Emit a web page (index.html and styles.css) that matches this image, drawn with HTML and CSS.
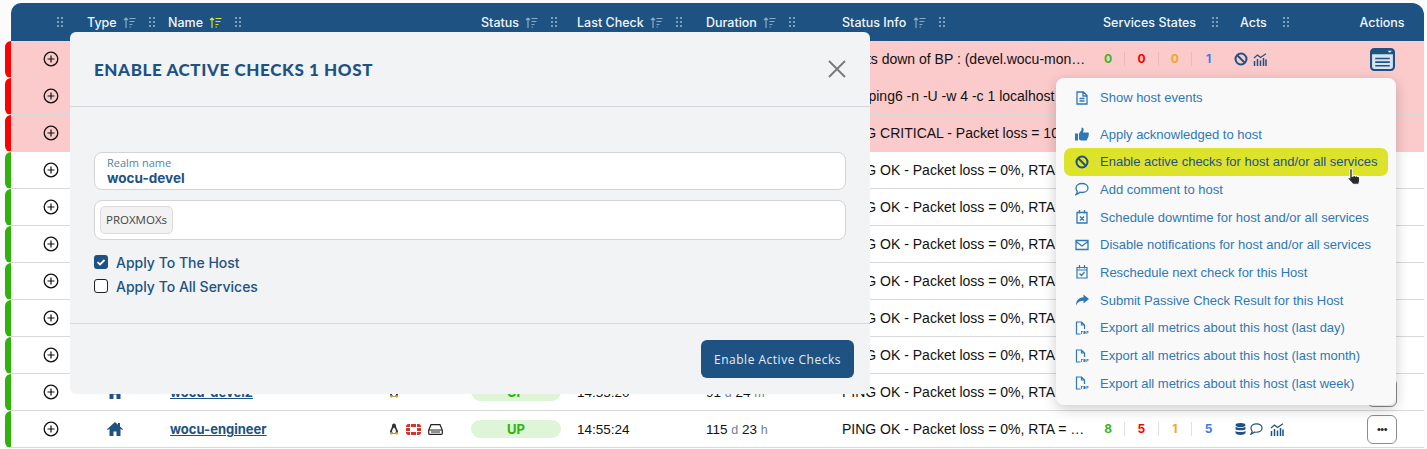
FILE: index.html
```html
<!DOCTYPE html>
<html lang="en">
<head>
    <meta charset="UTF-8">
    <title>Hosts</title>
    <link rel="stylesheet" href="styles.css">
</head>
<body>
    <!-- shared icons -->
    <svg class="defs" width="0" height="0">
        <symbol id="i-grip" viewBox="0 0 8 10"><g fill="currentColor"><rect x="1" y="0" width="2" height="2"/><rect x="5" y="0" width="2" height="2"/><rect x="1" y="4" width="2" height="2"/><rect x="5" y="4" width="2" height="2"/><rect x="1" y="8" width="2" height="2"/><rect x="5" y="8" width="2" height="2"/></g></symbol>
        <symbol id="i-sort" viewBox="0 0 13 11"><path d="M3 11V1M1 3l2-2 2 2M6.500 1.500h6M6.500 4.500h5M6.500 7.500h3M6.500 10h1.500" fill="none" stroke="currentColor" stroke-width="1.200"/></symbol>
        <symbol id="i-plus" viewBox="0 0 16 16"><circle cx="8" cy="8" r="6.800" fill="none" stroke="currentColor" stroke-width="1.300"/><path d="M8 4.500v7M4.500 8h7" stroke="currentColor" stroke-width="1.200"/></symbol>
        <symbol id="i-home" viewBox="0 0 16 14"><path d="M8 0L0 7.200l.8.800L2.500 6.700V14h4V9.500h3V14h4V6.700L15.200 8l.8-.8L13 4.500V1h-2v1.700z" fill="currentColor"/></symbol>
        <symbol id="i-ban" viewBox="0 0 14 14"><circle cx="7" cy="7" r="5.500" fill="none" stroke="currentColor" stroke-width="2"/><path d="M3 3l8 8" stroke="currentColor" stroke-width="2"/></symbol>
        <symbol id="i-chart" viewBox="0 0 14 13"><path d="M1 5l3.500-3 3 2.500L13 .8" fill="none" stroke="currentColor" stroke-width="1.200"/><path d="M1.500 8v5M4.500 6v7M7.500 7.500V13M10.500 5v8M13 6.500V13" stroke="currentColor" stroke-width="1.500"/></symbol>
        <symbol id="i-comment" viewBox="0 0 14 13"><path d="M7 1c3.300 0 6 1.900 6 4.500S10.300 10 7 10c-.8 0-1.500-.1-2.200-.3C3.800 10.800 2.500 11.600 1 12c.7-.9 1.300-2 1.300-3C1.500 8 1 6.800 1 5.500 1 2.900 3.700 1 7 1z" fill="none" stroke="currentColor" stroke-width="1.300"/></symbol>
        <symbol id="i-db" viewBox="0 0 11 12"><g fill="currentColor"><ellipse cx="5.500" cy="2" rx="5" ry="2"/><path d="M.5 3.700C1.500 5 9.500 5 10.500 3.700v2.500C9.500 7.500 1.500 7.500.5 6.200zM.5 8c1 1.300 9 1.300 10 0v2c-1 2.600-9 2.600-10 0z"/></g></symbol>
        <symbol id="i-file" viewBox="0 0 12 14"><path d="M1 1h6.500L11 4.500V13H1zM7 1v4h4M3.500 7.500h5M3.500 10h5" fill="none" stroke="currentColor" stroke-width="1.300"/></symbol>
        <symbol id="i-thumb" viewBox="0 0 14 13"><path d="M0 6h3v7H0zM4 6l2.500-3.500V.3C8 0 9 1 8.500 3L8 5h4.700c1.500 0 1.600 2 .7 2.400.6.700.3 1.700-.4 2 .3.800-.1 1.600-.8 1.800.1 1-.5 1.800-1.700 1.800H7c-1.200 0-2-.5-3-1z" fill="currentColor"/></symbol>
        <symbol id="i-cal-x" viewBox="0 0 12 14"><path d="M1 2.500h10V13H1zM3.500 0v3.500M8.500 0v3.500M4 6.500l4 4M8 6.500l-4 4" fill="none" stroke="currentColor" stroke-width="1.300"/></symbol>
        <symbol id="i-cal-ok" viewBox="0 0 12 14"><path d="M1 2.500h10V13H1zM3.500 0v3.500M8.500 0v3.500M1 5h10M3.500 8.500l2 2 3-3.500" fill="none" stroke="currentColor" stroke-width="1.200"/></symbol>
        <symbol id="i-mail" viewBox="0 0 14 11"><path d="M1 1h12v9H1zM1 2l6 4.500L13 2" fill="none" stroke="currentColor" stroke-width="1.300"/></symbol>
        <symbol id="i-share" viewBox="0 0 14 11"><path d="M8.500 0L14 4.500 8.500 9V6.300C5 6.300 2.500 7.500 1 11c0-5 2.500-8 7.500-8.300z" fill="currentColor"/></symbol>
        <symbol id="i-pdf" viewBox="0 0 13 14"><path d="M5 13H1V1h5l3 3v4M6 1v3h3" fill="none" stroke="currentColor" stroke-width="1.200"/><path d="M5.500 10h1.700v1H6.300v2h-.8zM8 10h1.500l.7.800v1.400l-.7.800H8zM11 10h2v.8h-1.200v.6H13v.7h-1.200V13H11z" fill="currentColor"/></symbol>
        <symbol id="i-tux" viewBox="0 0 10 12"><path d="M5 .5C3.500.5 3 1.800 3 3.200 3 5 1 6.500 1 9l1 1.500h6L9 9c0-2.500-2-4-2-5.800C7 1.800 6.500.5 5 .5z" fill="#333"/><path d="M5 4.500C3.700 5.500 3 7.500 3 9l1 1h2l1-1c0-1.500-.7-3.500-2-4.500z" fill="#fff"/><path d="M.5 10l2-1 1 2-1.500 1zM9.500 10l-2-1-1 2 1.500 1z" fill="#e9a820"/></symbol>
        <symbol id="i-forti" viewBox="0 0 15 11"><g fill="#d2352c"><path d="M0 2.500C0 1 1 0 2.500 0H4v3H0zM5 0h5v3H5zM11 0h1.500C14 0 15 1 15 2.500V3h-4zM0 4h4v3H0zM11 4h4v3h-4zM0 8h4v3H2.500C1 11 0 10 0 8.500zM5 8h5v3H5zM11 8h4v.5c0 1.500-1 2.500-2.500 2.500H11z"/></g></symbol>
        <symbol id="i-device" viewBox="0 0 15 11"><path d="M3 .7h9L14.300 6v3.300c0 .6-.4 1-1 1H1.700c-.6 0-1-.4-1-1V6z" fill="none" stroke="#222" stroke-width="1.200"/><path d="M1 6h13M3 8h9" stroke="#222" stroke-width="1"/></symbol>
    </svg>

    <div class="hosts-table">
        <div class="row head">
            <div class="head-cell first"><svg class="grip"><use href="#i-grip"/></svg></div>
            <div class="head-cell">Type <svg class="sort"><use href="#i-sort"/></svg><svg class="grip"><use href="#i-grip"/></svg></div>
            <div class="head-cell">Name <svg class="sort on"><use href="#i-sort"/></svg><svg class="grip"><use href="#i-grip"/></svg></div>
            <div class="head-cell"></div>
            <div class="head-cell pad-status">Status <svg class="sort"><use href="#i-sort"/></svg><svg class="grip"><use href="#i-grip"/></svg></div>
            <div class="head-cell">Last Check <svg class="sort"><use href="#i-sort"/></svg><svg class="grip"><use href="#i-grip"/></svg></div>
            <div class="head-cell">Duration <svg class="sort"><use href="#i-sort"/></svg><svg class="grip"><use href="#i-grip"/></svg></div>
            <div class="head-cell">Status Info <svg class="sort"><use href="#i-sort"/></svg><svg class="grip"><use href="#i-grip"/></svg></div>
            <div class="head-cell pad-states">Services States <svg class="grip"><use href="#i-grip"/></svg></div>
            <div class="head-cell pad-acts">Acts <svg class="grip"><use href="#i-grip"/></svg></div>
            <div class="head-cell center">Actions</div>
        </div>

        <div class="row down">
            <div class="expander"><svg><use href="#i-plus"/></svg></div>
            <div></div><div></div><div></div><div></div><div></div><div></div>
            <div class="info">Hosts down of BP : (devel.wocu-monitoring.com)</div>
            <div class="states"><b class="ok">0</b><b class="crit">0</b><b class="warn">0</b><b class="unk">1</b></div>
            <div class="acts"><svg class="a-ban"><use href="#i-ban"/></svg><svg class="a-chart"><use href="#i-chart"/></svg></div>
            <div class="center">
                <svg class="open-menu" viewBox="0 0 24 22"><rect x="1" y="1" width="22" height="20" rx="3" fill="#d7e3ee" stroke="#1d5283" stroke-width="2"/><path d="M1 2.500a2 2 0 0 1 2-1.500h18a2 2 0 0 1 2 1.500V6H1z" fill="#1d5283"/><path d="M17 2.500h4l-2 2z" fill="#fff"/><path d="M5 10h14M5 13.500h14M5 17h14" stroke="#1d5283" stroke-width="1.600"/></svg>
            </div>
        </div>
        <div class="row down">
            <div class="expander"><svg><use href="#i-plus"/></svg></div>
            <div></div><div></div><div></div><div></div><div></div><div></div>
            <div class="info">/bin/ping6 -n -U -w 4 -c 1 localhost</div>
        </div>
        <div class="row down">
            <div class="expander"><svg><use href="#i-plus"/></svg></div>
            <div></div><div></div><div></div><div></div><div></div><div></div>
            <div class="info">PING CRITICAL - Packet loss = 100%</div>
        </div>
        <div class="row up">
            <div class="expander"><svg><use href="#i-plus"/></svg></div>
            <div></div><div></div><div></div><div></div><div></div><div></div>
            <div class="info">PING OK - Packet loss = 0%, RTA = 0.42 ms</div>
        </div>
        <div class="row up">
            <div class="expander"><svg><use href="#i-plus"/></svg></div>
            <div></div><div></div><div></div><div></div><div></div><div></div>
            <div class="info">PING OK - Packet loss = 0%, RTA = 0.38 ms</div>
        </div>
        <div class="row up">
            <div class="expander"><svg><use href="#i-plus"/></svg></div>
            <div></div><div></div><div></div><div></div><div></div><div></div>
            <div class="info">PING OK - Packet loss = 0%, RTA = 0.51 ms</div>
        </div>
        <div class="row up">
            <div class="expander"><svg><use href="#i-plus"/></svg></div>
            <div></div><div></div><div></div><div></div><div></div><div></div>
            <div class="info">PING OK - Packet loss = 0%, RTA = 0.44 ms</div>
        </div>
        <div class="row up">
            <div class="expander"><svg><use href="#i-plus"/></svg></div>
            <div></div><div></div><div></div><div></div><div></div><div></div>
            <div class="info">PING OK - Packet loss = 0%, RTA = 0.47 ms</div>
        </div>
        <div class="row up">
            <div class="expander"><svg><use href="#i-plus"/></svg></div>
            <div></div><div></div><div></div><div></div><div></div><div></div>
            <div class="info">PING OK - Packet loss = 0%, RTA = 0.40 ms</div>
        </div>
        <div class="row up">
            <div class="expander"><svg><use href="#i-plus"/></svg></div>
            <div class="type"><svg><use href="#i-home"/></svg></div>
            <div class="name"><a href="#">wocu-devel2</a></div>
            <div class="os"><svg class="o-tux"><use href="#i-tux"/></svg></div>
            <div><span class="pill">UP</span></div>
            <div class="time">14:55:20</div>
            <div class="dur">91 <i>d</i> 24 <i>m</i></div>
            <div class="info">PING OK - Packet loss = 0%, RTA = 0.46 ms</div>
            <div></div><div></div>
            <div class="center"><button class="more">&bull;&bull;&bull;</button></div>
        </div>
        <div class="row up">
            <div class="expander"><svg><use href="#i-plus"/></svg></div>
            <div class="type"><svg><use href="#i-home"/></svg></div>
            <div class="name"><a href="#">wocu-engineer</a></div>
            <div class="os"><svg class="o-tux"><use href="#i-tux"/></svg><svg class="o-forti"><use href="#i-forti"/></svg><svg class="o-device"><use href="#i-device"/></svg></div>
            <div><span class="pill">UP</span></div>
            <div class="time">14:55:24</div>
            <div class="dur">115 <i>d</i> 23 <i>h</i></div>
            <div class="info">PING OK - Packet loss = 0%, RTA = 0.43 ms</div>
            <div class="states"><b class="ok">8</b><b class="crit">5</b><b class="warn">1</b><b class="unk">5</b></div>
            <div class="acts"><svg class="a-db"><use href="#i-db"/></svg><svg class="a-comment"><use href="#i-comment"/></svg><svg class="a-chart"><use href="#i-chart"/></svg></div>
            <div class="center"><button class="more">&bull;&bull;&bull;</button></div>
        </div>
    </div>

    <!-- dropdown of the first row -->
    <div class="menu">
        <a class="menu-item gap"><svg><use href="#i-file"/></svg>Show host events</a>
        <a class="menu-item"><svg><use href="#i-thumb"/></svg>Apply acknowledged to host</a>
        <a class="menu-item hover"><svg><use href="#i-ban"/></svg>Enable active checks for host and/or all services</a>
        <a class="menu-item"><svg><use href="#i-comment"/></svg>Add comment to host</a>
        <a class="menu-item"><svg><use href="#i-cal-x"/></svg>Schedule downtime for host and/or all services</a>
        <a class="menu-item"><svg><use href="#i-mail"/></svg>Disable notifications for host and/or all services</a>
        <a class="menu-item"><svg><use href="#i-cal-ok"/></svg>Reschedule next check for this Host</a>
        <a class="menu-item"><svg><use href="#i-share"/></svg>Submit Passive Check Result for this Host</a>
        <a class="menu-item"><svg><use href="#i-pdf"/></svg>Export all metrics about this host (last day)</a>
        <a class="menu-item"><svg><use href="#i-pdf"/></svg>Export all metrics about this host (last month)</a>
        <a class="menu-item"><svg><use href="#i-pdf"/></svg>Export all metrics about this host (last week)</a>
    </div>

    <svg class="cursor" viewBox="0 0 16 20"><path d="M4.500 1.500c.8 0 1.300.5 1.300 1.300v6l1-.2c.4-.8 1.700-.7 2 .1.500-.6 1.700-.4 2 .4.700-.4 1.900 0 2 1 .3 2 0 4-.8 6.400H6.500L2 11.500c-.6-.9.500-2 1.500-1.300V2.800c0-.8.200-1.300 1-1.300z" fill="#2b2b2b" stroke="#fff" stroke-width="1"/></svg>

    <div class="modal">
        <div class="modal-head">
            <h2>ENABLE ACTIVE CHECKS 1 HOST</h2>
            <svg class="close" viewBox="0 0 18 18"><path d="M1 1l16 16M17 1L1 17" stroke="#777" stroke-width="1.800" fill="none"/></svg>
        </div>
        <div class="modal-body">
            <div class="field">
                <label>Realm name</label>
                <strong>wocu-devel</strong>
            </div>
            <div class="field tags"><span class="chip">PROXMOXs</span></div>
            <div class="check"><span class="box on"><svg viewBox="0 0 14 14"><path d="M3.500 7.200l2.500 2.300 4.500-4.500" fill="none" stroke="#fff" stroke-width="1.800"/></svg></span>Apply To The Host</div>
            <div class="check"><span class="box"></span>Apply To All Services</div>
        </div>
        <div class="modal-foot">
            <button class="submit">Enable Active Checks</button>
        </div>
    </div>
</body>
</html>
```

FILE: styles.css
```css
html, body {
    margin: 0;
    height: 449px;
    overflow: hidden;
}
body {
    background-color: #fbfbfc;
    font-family: "Liberation Sans", Arial, sans-serif;
    font-size: 14px;
    color: #111;
    padding: 3px 3px 0 11px;
    box-sizing: border-box;
}
.defs {
    position: absolute;
}

/* table */
.row {
    display: grid;
    grid-template-columns: 76px 81px 217px 86px 106px 129px 136px 250px 142px 106px 84px;
    height: 37px;
    align-items: center;
    box-sizing: border-box;
}
.head {
    height: 38px;
    background-color: #1d5283;
    border-radius: 10px 12px 0 0;
    color: #f2f5f8;
}
.head-cell {
    display: flex;
    align-items: center;
    font-family: Inter, sans-serif;
    font-size: 12.5px;
    font-weight: 500;
    white-space: pre;
}
.head-cell.first {
    padding-left: 45px;
}
.head-cell.center {
    justify-content: center;
}
.pad-status {
    padding-left: 10px;
}
.pad-states {
    padding-left: 11px;
}
.pad-acts {
    padding-left: 6px;
}
.grip {
    width: 8px;
    height: 10px;
    margin-left: 12px;
    color: #7e9dbb;
}
.first .grip {
    margin-left: 0;
}
.sort {
    width: 13px;
    height: 11px;
    margin-left: 3px;
    color: #8ea9c4;
}
.sort + .grip {
    margin-left: 12px;
}
.sort.on {
    color: #dde22a;
}

.down, .up {
    margin-left: -6px;
    border-left: 6px solid;
    border-bottom: 1px solid #d9d9d9;
    border-radius: 6px 0 0 6px;
}
.down {
    background-color: #fbcaca;
    border-left-color: #fe0000;
}
.up {
    background-color: #fff;
    border-left-color: #2fb30a;
}
.expander {
    padding-left: 32px;
    height: 16px;
}
.expander svg {
    display: block;
    width: 16px;
    height: 16px;
    color: #111;
}
.type {
    padding-left: 20px;
    color: #1d5283;
    height: 14px;
}
.type svg {
    display: block;
    width: 16px;
    height: 14px;
}
.name a {
    margin-left: 2px;
    font-family: Inter, sans-serif;
    font-size: 13px;
    font-weight: 700;
    color: #1d5283;
}
.os {
    display: flex;
    align-items: center;
    gap: 7px;
    padding-left: 4px;
}
.o-tux {
    width: 10px;
    height: 12px;
}
.o-forti, .o-device {
    width: 15px;
    height: 11px;
}
.pill {
    display: block;
    width: 90px;
    line-height: 18px;
    text-align: center;
    background-color: #dff5d8;
    border-radius: 9px;
    color: #2fb30a;
    font-family: Inter, sans-serif;
    font-size: 13px;
    font-weight: 700;
}
.time {
    font-size: 13.500px;
}
.dur {
    font-size: 13.500px;
}
.dur i {
    font-style: normal;
    color: #6f7f92;
    font-size: 12.500px;
}
.info {
    font-size: 14px;
    padding-right: 6px;
    white-space: nowrap;
    overflow: hidden;
    text-overflow: ellipsis;
}
.states {
    display: flex;
}
.states b {
    width: 33.300px;
    text-align: center;
    font-family: Inter, sans-serif;
    font-size: 12px;
    font-weight: 700;
    line-height: 14px;
    border-right: 1px solid #e0e0e0;
    box-sizing: border-box;
}
.states b:last-child {
    border-right: none;
}
.down .states b {
    border-right-color: #eeb8b8;
}
.ok { color: #3cb521; }
.crit { color: #fe0000; }
.warn { color: #f5a623; }
.unk { color: #3b7de8; }
.acts {
    display: flex;
    align-items: center;
    color: #1d5283;
}
.a-ban {
    width: 14px;
    height: 14px;
    margin-right: 5px;
}
.a-chart {
    width: 14px;
    height: 13px;
}
.a-db {
    width: 11px;
    height: 12px;
    margin-left: 1px;
    margin-right: 4px;
}
.a-comment {
    width: 13px;
    height: 12px;
    margin-right: 7px;
}
.center {
    display: flex;
    justify-content: center;
    align-items: center;
}
.open-menu {
    width: 25px;
    height: 23px;
}
.more {
    width: 30px;
    height: 29px;
    padding: 0;
    background-color: #fff;
    border: 1px solid #8c8c8c;
    border-radius: 6px;
    color: #222;
    font-size: 11px;
    letter-spacing: -0.500px;
}

/* dropdown */
.menu {
    position: absolute;
    left: 1056px;
    top: 78px;
    width: 340px;
    height: 327px;
    box-sizing: border-box;
    padding: 6px 8px;
    background-color: #f9f9f9;
    border-radius: 8px;
    box-shadow: 0 4px 14px rgba(0, 0, 0, 0.2);
}
.menu-item {
    display: flex;
    align-items: center;
    height: 27.700px;
    padding-left: 11px;
    border-radius: 7px;
    font-size: 13px;
    color: #2f78b5;
    white-space: nowrap;
}
.menu-item svg {
    flex: none;
    width: 14px;
    height: 14px;
    margin-right: 11px;
}
.menu-item.gap {
    margin-bottom: 8.500px;
}
.menu-item.hover {
    background-color: #dde22a;
    color: #1d5283;
}
.cursor {
    position: absolute;
    left: 1346px;
    top: 167px;
    width: 17px;
    height: 21px;
}

/* modal */
.modal {
    position: absolute;
    left: 70px;
    top: 32px;
    width: 800px;
    height: 362px;
    background-color: #f2f3f5;
    border-radius: 6px;
    display: flex;
    flex-direction: column;
}
.modal-head {
    height: 75px;
    flex: none;
    box-sizing: border-box;
    display: flex;
    align-items: center;
    justify-content: space-between;
    padding: 0 24px;
    border-bottom: 1px solid #d5d7da;
}
.modal-head h2 {
    margin: 0;
    font-family: Lato, sans-serif;
    font-size: 17px;
    font-weight: 900;
    letter-spacing: 0.600px;
    color: #1d5283;
}
.close {
    width: 18px;
    height: 18px;
}
.modal-body {
    flex: 1;
    padding: 45px 24px 0;
}
.field {
    box-sizing: border-box;
    height: 38px;
    padding: 3px 12px;
    background-color: #fff;
    border: 1px solid #d4d4d4;
    border-radius: 8px;
    margin-bottom: 10px;
}
.field label {
    display: block;
    font-family: "Open Sans", sans-serif;
    font-size: 11px;
    line-height: 14px;
    color: #4f83ad;
}
.field strong {
    display: block;
    font-family: Inter, sans-serif;
    font-size: 13.500px;
    line-height: 16px;
    color: #1d5283;
}
.tags {
    height: 40px;
    padding: 5px;
}
.chip {
    display: inline-block;
    box-sizing: border-box;
    height: 28px;
    line-height: 26px;
    padding: 0 5px;
    background-color: #f2f2f2;
    border: 1px solid #dcdcdc;
    border-radius: 5px;
    font-family: "Open Sans", sans-serif;
    font-size: 11.500px;
    color: #444;
}
.check {
    display: flex;
    align-items: center;
    height: 24px;
    font-family: Inter, sans-serif;
    font-size: 14px;
    font-weight: 500;
    color: #1d5283;
}
.box {
    box-sizing: border-box;
    width: 14px;
    height: 14px;
    margin-right: 8px;
    background-color: #fff;
    border: 1px solid #222;
    border-radius: 3px;
}
.box.on {
    background-color: #1d5283;
    border: none;
}
.box svg {
    display: block;
}
.modal-foot {
    height: 71px;
    flex: none;
    box-sizing: border-box;
    display: flex;
    justify-content: flex-end;
    padding: 16px 16px 0 0;
    border-top: 1px solid #d5d7da;
}
.submit {
    width: 153px;
    height: 38px;
    background-color: #1d5283;
    color: #e8edf2;
    border: none;
    border-radius: 6px;
    font-family: "Open Sans", sans-serif;
    font-size: 12px;
    letter-spacing: 0.500px;
}
```
